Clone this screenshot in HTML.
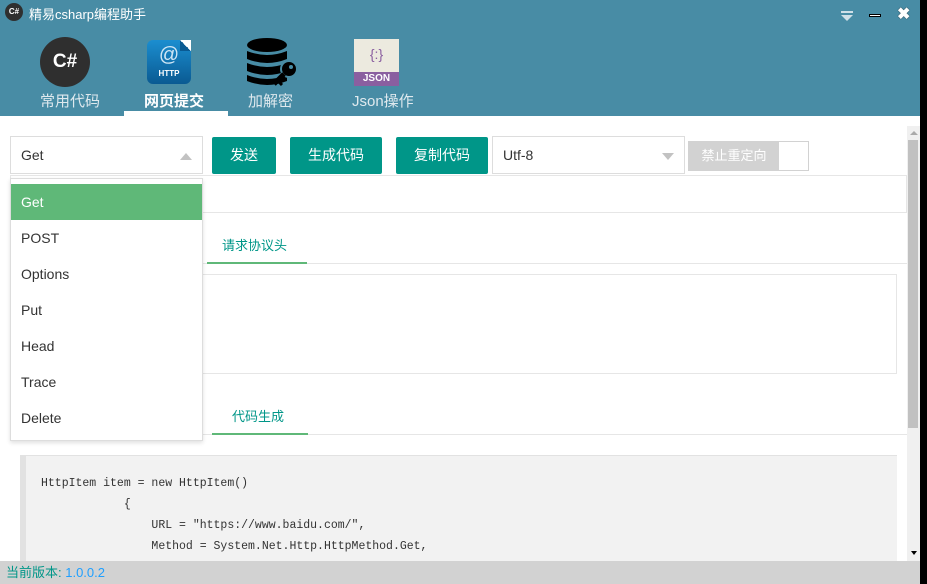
<!DOCTYPE html>
<html><head><meta charset="utf-8"><style>
*{margin:0;padding:0;box-sizing:border-box}
body{width:927px;height:584px;overflow:hidden;background:#fff;font-family:"Liberation Sans","Noto Sans CJK SC",sans-serif;position:relative}
.hdr{position:absolute;left:0;top:0;width:927px;height:116px;background:#488ca5}
.abs{position:absolute}
.tab{position:absolute;top:90px;font-size:15px;color:#dfe9ee;text-align:center}
.btn{position:absolute;top:137px;height:37px;background:#009688;color:#fff;font-size:14px;line-height:37px;text-align:center;border-radius:2px}
.sel{position:absolute;border:1px solid #ddd;background:#fff;font-size:14px;color:#333;line-height:36px;padding-left:10px}
.dd{position:absolute;left:10px;top:178px;width:193px;height:263px;background:#fff;border:1px solid #ddd;box-shadow:0 2px 4px rgba(0,0,0,.12)}
.dd div{height:36px;line-height:36px;padding-left:10px;font-size:14px;color:#333}
.code{position:absolute;left:20px;top:455px;width:877px;height:110px;background:#f2f2f2;border-left:6px solid #e2e2e2;border-top:1px solid #e2e2e2;font-family:"Liberation Mono",monospace;font-size:11.5px;color:#333;padding:17px 0 0 15px;line-height:21px;white-space:pre}
</style></head><body>
<div class="hdr"></div>
<div class="abs" style="left:5px;top:3px;width:18px;height:18px;border-radius:50%;background:#2f2f2f;color:#fff;font-size:8px;line-height:18px;text-align:center;font-weight:bold">C#</div>
<div class="abs" style="left:29px;top:4px;font-size:13px;color:#fff">精易csharp编程助手</div>
<div class="abs" style="left:841px;top:11px;width:12px;height:2px;background:#cfe0e8"></div>
<div class="abs" style="left:841px;top:15px;width:0;height:0;border-left:6px solid transparent;border-right:6px solid transparent;border-top:6px solid #cfe0e8"></div>
<div class="abs" style="left:869px;top:14px;width:12px;height:3px;background:#fff;border:1px solid #000"></div>
<div class="abs" style="left:897px;top:4px;font-size:16px;color:#fff;font-weight:bold;text-shadow:0 0 1px #000">✖</div>
<div class="abs" style="left:40px;top:37px;width:50px;height:50px;border-radius:50%;background:#2f2f2f;color:#fff;font-size:19px;line-height:50px;text-align:center;font-weight:bold">C#</div>
<div class="abs" style="left:147px;top:40px;width:44px;height:44px;border-radius:6px;background:linear-gradient(#1b8ed0,#0a5a92);color:#cfe6f5;text-align:center;font-size:20px;line-height:30px">@<div style="font-size:8px;line-height:8px;font-weight:bold;color:#fff">HTTP</div></div>
<div class="abs" style="left:180px;top:40px;width:11px;height:11px;background:linear-gradient(45deg,#0a5a92 50%,#fff 50%)"></div>
<svg class="abs" style="left:246px;top:37px" width="54" height="50"><ellipse cx="21" cy="8" rx="20" ry="7" fill="#000"/><path d="M1 14 q20 8 40 0 v8 q-20 8 -40 0z" fill="#000"/><path d="M1 26 q20 8 40 0 v8 q-20 8 -40 0z" fill="#000"/><path d="M1 38 q20 8 40 0 v6 q-20 8 -40 0z" fill="#000"/><circle cx="43" cy="32" r="8" fill="#000" stroke="#488ca5" stroke-width="2"/><circle cx="45" cy="30" r="2" fill="#488ca5"/><path d="M38 37 L28 47" stroke="#000" stroke-width="5"/><path d="M32 44 l4 4" stroke="#000" stroke-width="3"/></svg>
<div class="abs" style="left:354px;top:39px;width:45px;height:47px;background:#eceadf"><div style="color:#8a5fa0;font-size:14px;text-align:center;line-height:30px">{:}</div><div style="background:#8a5fa0;color:#fff;font-size:10px;font-weight:bold;text-align:center;height:14px;line-height:14px;margin-top:3px">JSON</div></div>
<div class="tab" style="left:40px">常用代码</div>
<div class="tab" style="left:144px;color:#fff;font-weight:bold">网页提交</div>
<div class="tab" style="left:248px">加解密</div>
<div class="tab" style="left:352px">Json操作</div>
<div class="abs" style="left:124px;top:111px;width:104px;height:5px;background:#fff"></div>

<div class="sel" style="left:10px;top:136px;width:193px;height:38px">Get<span style="position:absolute;right:10px;top:16px;border-left:6px solid transparent;border-right:6px solid transparent;border-bottom:7px solid #c2c2c2"></span></div>
<div class="btn" style="left:212px;width:64px">发送</div>
<div class="btn" style="left:290px;width:92px">生成代码</div>
<div class="btn" style="left:396px;width:92px">复制代码</div>
<div class="sel" style="left:492px;top:136px;width:193px;height:38px">Utf-8<span style="position:absolute;right:10px;top:16px;border-left:6px solid transparent;border-right:6px solid transparent;border-top:7px solid #c2c2c2"></span></div>
<div class="abs" style="left:688px;top:141px;width:121px;height:30px;border:1px solid #d2d2d2;background:#fff"><div style="width:90px;height:28px;background:#d2d2d2;color:#fff;font-size:13px;line-height:28px;text-align:center">禁止重定向</div></div>
<div class="abs" style="left:10px;top:175px;width:897px;height:38px;border:1px solid #e6e6e6"></div>
<div class="abs" style="left:10px;top:263px;width:897px;height:1px;background:#e6e6e6"></div>
<div class="abs" style="left:222px;top:235px;font-size:13px;color:#009688">请求协议头</div>
<div class="abs" style="left:207px;top:262px;width:100px;height:2px;background:#5fb878"></div>
<div class="abs" style="left:200px;top:274px;width:697px;height:100px;border:1px solid #e6e6e6"></div>
<div class="abs" style="left:10px;top:434px;width:897px;height:1px;background:#e6e6e6"></div>
<div class="abs" style="left:232px;top:406px;font-size:13px;color:#009688">代码生成</div>
<div class="abs" style="left:212px;top:433px;width:96px;height:2px;background:#5fb878"></div>
<div class="code">HttpItem item = new HttpItem()
            {
                URL = "https://www.baidu.com/",
                Method = System.Net.Http.HttpMethod.Get,
                Allowautoredirect = true,</div>

<div class="dd"><div style="background:#5fb878;color:#fff;margin-top:5px">Get</div><div>POST</div><div>Options</div><div>Put</div><div>Head</div><div>Trace</div><div>Delete</div></div>

<div class="abs" style="left:907px;top:126px;width:13px;height:435px;background:#f0f0f0"></div>
<div class="abs" style="left:910px;top:131px;border-left:4px solid transparent;border-right:4px solid transparent;border-bottom:4px solid #aaa"></div>
<div class="abs" style="left:908px;top:140px;width:10px;height:288px;background:#c1c1c1"></div>
<div class="abs" style="left:911px;top:551px;border-left:3px solid transparent;border-right:3px solid transparent;border-top:4px solid #000"></div>
<div class="abs" style="left:920px;top:0;width:7px;height:584px;background:#000"></div>
<div class="abs" style="left:0;top:561px;width:920px;height:23px;background:#d2d2d2;font-size:13px;line-height:23px;padding-left:6px;color:#009688">当前版本: <span style="color:#1e9fff">1.0.0.2</span></div>
</body></html>
